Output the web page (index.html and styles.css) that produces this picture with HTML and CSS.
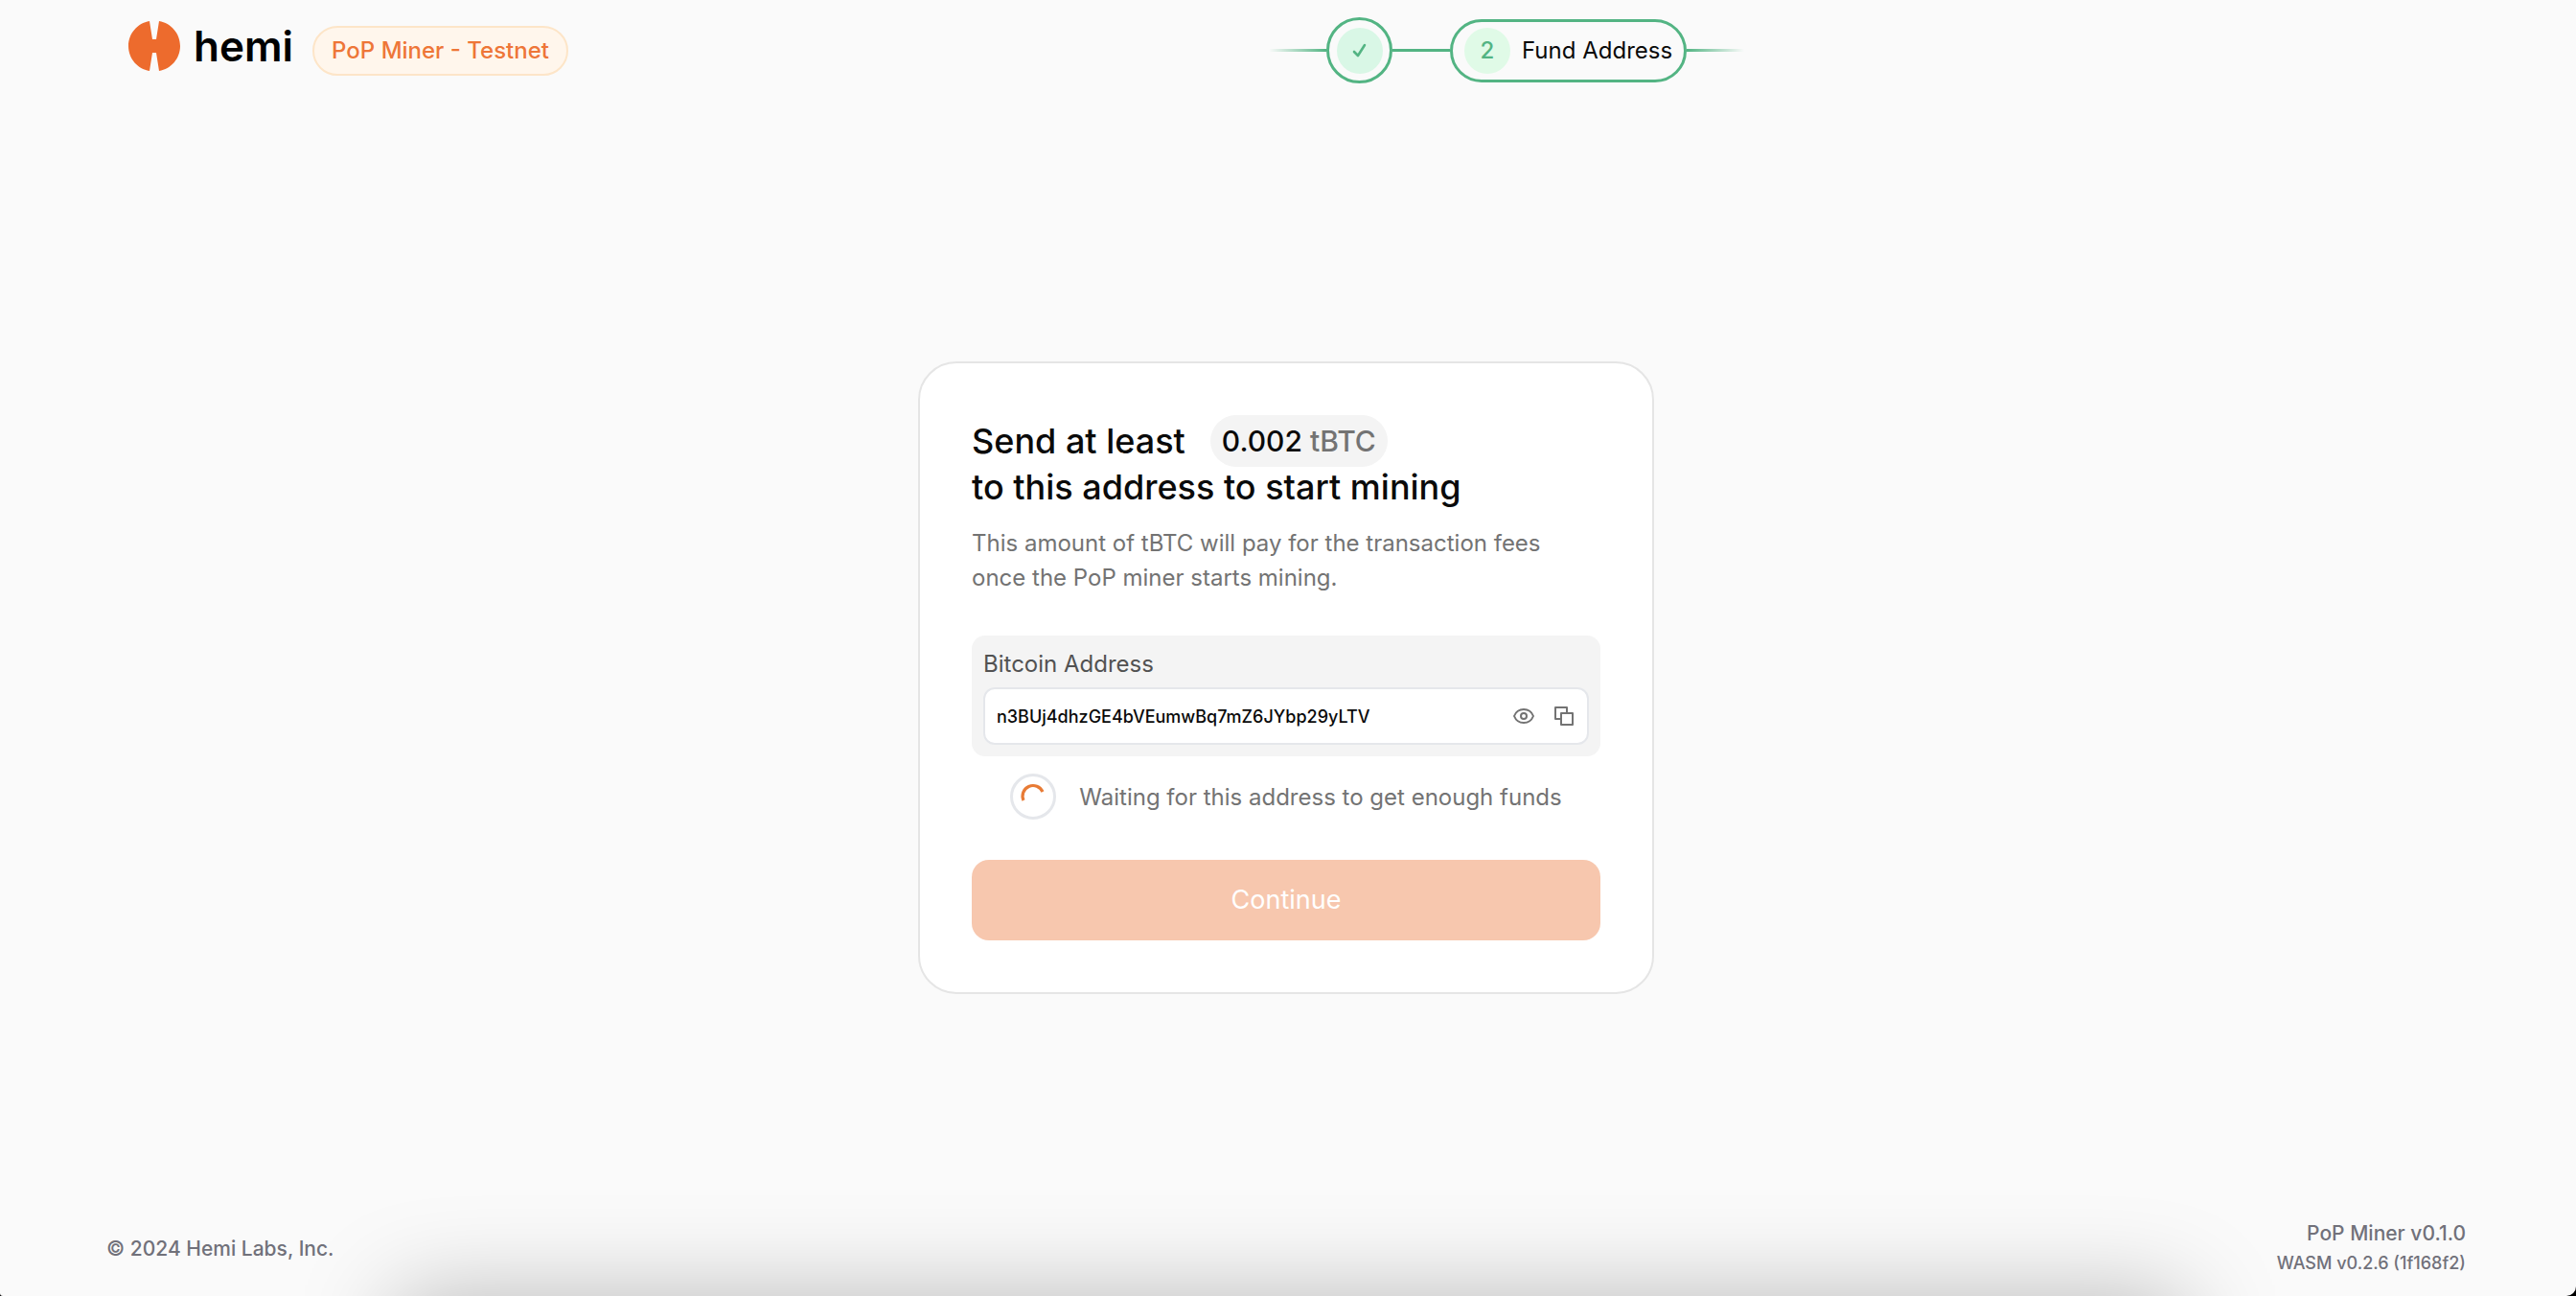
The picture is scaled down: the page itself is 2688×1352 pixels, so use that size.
FILE: index.html
```html
<!DOCTYPE html>
<html lang="en">
<head>
  <meta charset="utf-8">
  <meta name="viewport" content="width=device-width, initial-scale=1">
  <title>Hemi PoP Miner</title>
  <link rel="stylesheet" href="styles.css">
</head>
<body>
  <div class="page">
    <header class="header">
      <div class="brand">
        <a class="logo" href="#" aria-label="hemi">
          <svg class="logo-mark" viewBox="0 0 54 52" aria-hidden="true">
            <path d="M22 0 25 19h4L32 0C44.500 2 54 13 54 26s-9.500 24-22 26l-3-19h-4l-3 19C9.500 50 0 39 0 26S9.500 2 22 0z" fill="#ed6b2d"/>
          </svg>
          <span class="logo-name">hemi</span>
        </a>
        <span class="badge">PoP Miner - Testnet</span>
      </div>
      <ol class="stepper">
        <li class="line line-start" aria-hidden="true"></li>
        <li class="step step-done">
          <span class="dot dot-done">
            <svg class="check" viewBox="0 0 16 16" role="img" aria-label="Step 1 complete">
              <path d="M2 9l4 4 7-11" fill="none" stroke="#53b483" stroke-width="2.600" stroke-linecap="round" stroke-linejoin="round"/>
            </svg>
          </span>
        </li>
        <li class="line" aria-hidden="true"></li>
        <li class="step step-current" aria-current="step">
          <span class="dot">2</span>
          <span>Fund Address</span>
        </li>
        <li class="line line-end" aria-hidden="true"></li>
      </ol>
    </header>

    <main class="main">
      <section class="card">
        <h1 class="title">
          <span class="title-row">Send at least <span class="amount">0.002 <span class="unit">tBTC</span></span></span>
          <span class="title-row">to this address to start mining</span>
        </h1>
        <p class="description">This amount of tBTC will pay for the transaction fees once the PoP miner starts mining.</p>
        <div class="panel">
          <label class="label" for="address">Bitcoin Address</label>
          <div class="field">
            <input class="address" id="address" type="text" readonly value="n3BUj4dhzGE4bVEumwBq7mZ6JYbp29yLTV">
            <button class="icon-button" type="button" aria-label="Show on explorer">
              <svg class="icon" viewBox="0 0 24 24" aria-hidden="true">
                <path d="M2 12C4 7 8 5 12 5s8 2 10 7c-2 5-6 7-10 7S4 17 2 12z"/>
                <circle cx="12" cy="12" r="3"/>
              </svg>
            </button>
            <button class="icon-button" type="button" aria-label="Copy address">
              <svg class="icon" viewBox="0 0 24 24" aria-hidden="true">
                <path d="M9 15H3V3h12v6M9 9h12v12H9z"/>
              </svg>
            </button>
          </div>
        </div>
        <div class="status" role="status">
          <svg class="spinner" viewBox="0 0 48 48" aria-hidden="true">
            <circle cx="24" cy="24" r="22.500" fill="#fff" stroke="#e5e7eb" stroke-width="3"/>
            <path d="M14 28A10.800 10.800 0 0 1 34 19" fill="none" stroke="#e87b35" stroke-width="3.200"/>
          </svg>
          <span>Waiting for this address to get enough funds</span>
        </div>
        <button class="continue" type="button" disabled>Continue</button>
      </section>
    </main>

    <footer class="footer">
      <span>© 2024 Hemi Labs, Inc.</span>
      <div class="versions">
        <span>PoP Miner v0.1.0</span>
        <span class="wasm">WASM v0.2.6 (1f168f2)</span>
      </div>
    </footer>
    <div class="shade" aria-hidden="true"></div>
  </div>
</body>
</html>
```
FILE: styles.css
```css
* {
  box-sizing: border-box;
}

html {
  background: #000;
}

body {
  margin: 0;
  font-family: Inter, "Liberation Sans", sans-serif;
  color: #0a0a0a;
}

.page {
  position: relative;
  display: flex;
  flex-direction: column;
  min-height: 100vh;
  overflow: hidden;
  background: #fafafa;
  border-radius: 0 0 10px 3px;
}

.header {
  display: grid;
  grid-template-columns: 1fr 1fr;
  align-items: start;
  height: 142px;
  padding: 18px 174px 0 134px;
}

.brand {
  display: flex;
  align-items: flex-start;
  gap: 20px;
}

.logo {
  display: flex;
  align-items: center;
  gap: 14px;
  padding-top: 4px;
  color: #000;
  text-decoration: none;
}

.logo-mark {
  width: 54px;
  height: 52px;
}

.logo-name {
  font-size: 44px;
  font-weight: 600;
  line-height: 52px;
}

.badge {
  margin-top: 9px;
  padding: 0 18px;
  border: 2px solid #fde5c8;
  border-radius: 26px;
  background: #fff6ec;
  color: #ee7638;
  font-size: 24px;
  font-weight: 500;
  line-height: 48px;
}

.stepper {
  display: flex;
  align-items: center;
  margin: 0;
  padding: 0;
  list-style: none;
}

.line {
  width: 60px;
  height: 3px;
  background: #53b483;
}

.line-start {
  background: linear-gradient(to left, #53b483, transparent);
}

.line-end {
  background: linear-gradient(to right, #53b483, transparent);
}

.step {
  display: flex;
  align-items: center;
  border: 3px solid #53b483;
  font-size: 24px;
}

.step-done {
  justify-content: center;
  width: 69px;
  height: 69px;
  border-radius: 50%;
}

.step-current {
  gap: 12px;
  height: 66px;
  padding: 0 12px;
  border-radius: 33px;
}

.dot {
  display: flex;
  align-items: center;
  justify-content: center;
  width: 48px;
  height: 48px;
  border-radius: 50%;
  background: #e0fae7;
  color: #53b483;
  font-weight: 500;
}

.dot-done {
  background: #d9f7e6;
}

.check {
  width: 16px;
  height: 16px;
}

.main {
  display: flex;
  flex: 1;
  align-items: center;
  justify-content: center;
  padding-right: 4px;
}

.card {
  width: 768px;
  padding: 54px;
  border: 2px solid #e5e5e5;
  border-radius: 40px;
  background: #fff;
}

.title {
  margin: 0;
  font-size: 36px;
  font-weight: 500;
  line-height: 42px;
}

.title-row {
  display: flex;
  align-items: center;
  gap: 26px;
}

.amount {
  padding: 0 12px;
  border-radius: 27px;
  background: #f4f4f4;
  font-size: 30px;
  line-height: 54px;
}

.unit {
  color: #737373;
}

.description {
  margin: 20px 0 0;
  color: #737373;
  font-size: 24px;
  line-height: 36px;
}

.panel {
  margin-top: 42px;
  padding: 12px;
  border-radius: 14px;
  background: #f4f4f4;
}

.label {
  display: block;
  margin-bottom: 6px;
  color: #525252;
  font-size: 24px;
  line-height: 36px;
}

.field {
  display: flex;
  align-items: center;
  gap: 18px;
  height: 60px;
  padding: 0 12px;
  border: 2px solid #e5e7eb;
  border-radius: 12px;
  background: #fff;
}

.address {
  flex: 1;
  min-width: 0;
  padding: 0;
  border: 0;
  outline: 0;
  background: none;
  color: #0a0a0a;
  font: 500 18px Inter, "Liberation Sans", sans-serif;
}

.icon-button {
  display: flex;
  padding: 0;
  border: 0;
  background: none;
}

.icon {
  width: 24px;
  height: 24px;
  fill: none;
  stroke: #737373;
  stroke-width: 2;
  stroke-linejoin: round;
}

.status {
  display: flex;
  align-items: center;
  justify-content: center;
  gap: 24px;
  margin: 18px 0 42px;
  color: #737373;
  font-size: 24px;
}

.spinner {
  width: 48px;
  height: 48px;
}

.continue {
  display: block;
  width: 100%;
  height: 84px;
  padding: 0 0 2px;
  border: 0;
  border-radius: 18px;
  background: #f7c7ae;
  color: #fff;
  font: 400 27px Inter, "Liberation Sans", sans-serif;
}

.footer {
  display: flex;
  align-items: center;
  justify-content: space-between;
  height: 80px;
  padding: 0 115px 20px 111px;
  color: #71717a;
  font-size: 21px;
  font-weight: 500;
}

.versions {
  display: flex;
  flex-direction: column;
  align-items: flex-end;
  line-height: 31px;
}

.wasm {
  font-size: 18px;
}

.shade {
  position: absolute;
  top: 100%;
  right: 408px;
  left: 412px;
  height: 200px;
  box-shadow: 0 0 100px rgba(0, 0, 0, 0.26);
}
```
